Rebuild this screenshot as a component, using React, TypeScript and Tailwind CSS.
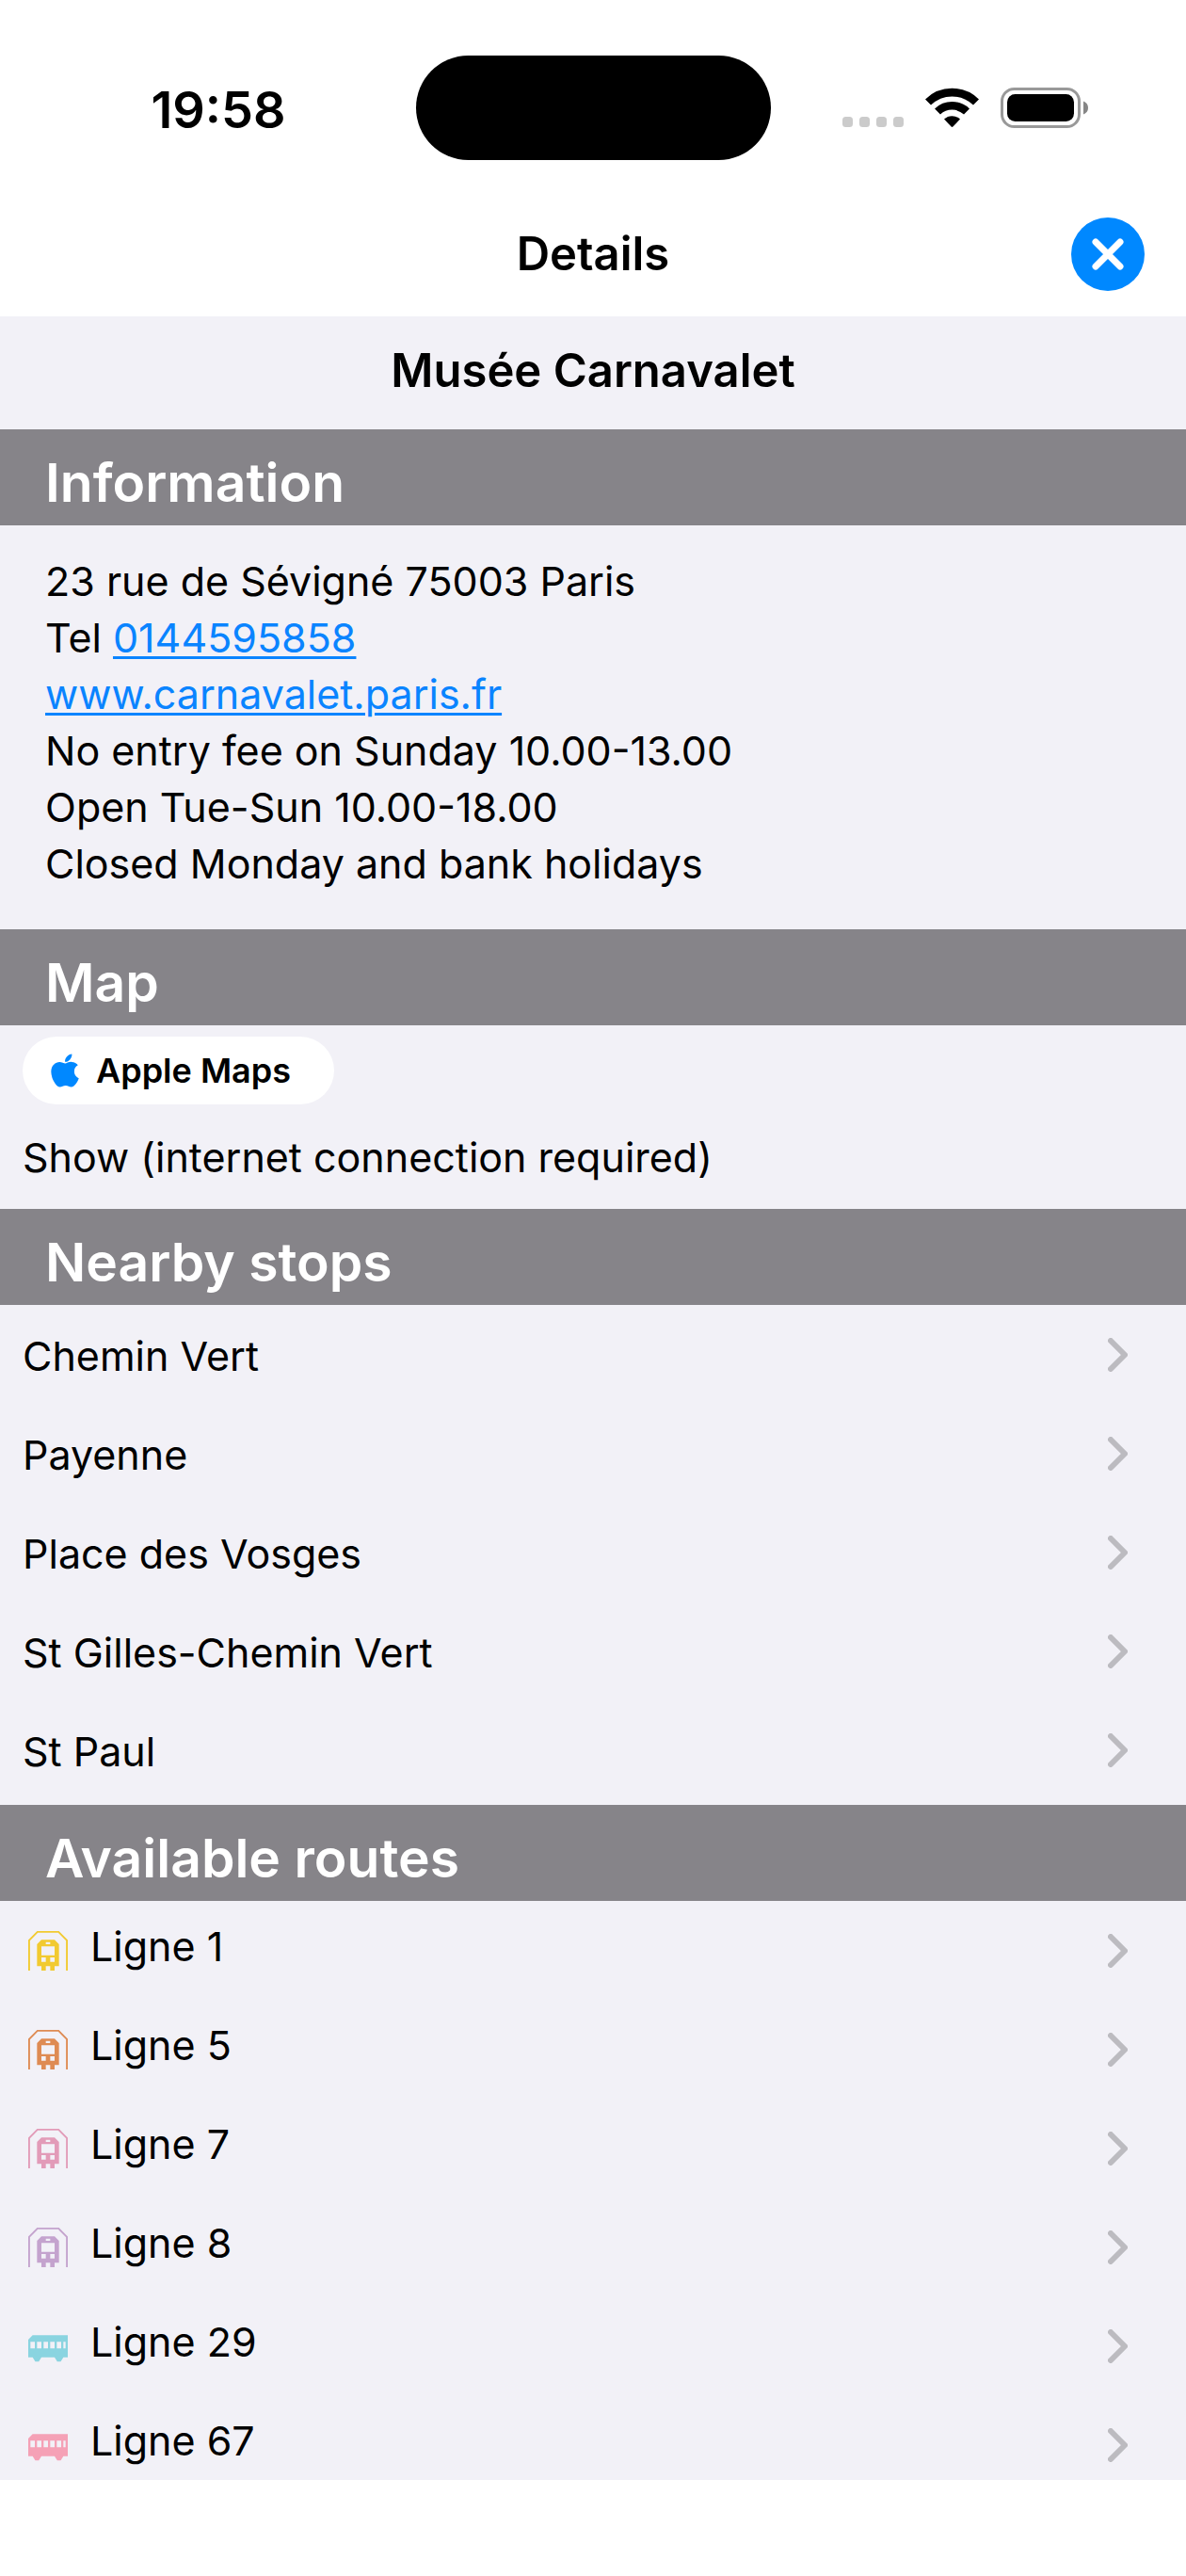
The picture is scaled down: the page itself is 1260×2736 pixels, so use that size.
import * as React from "react";
import { FaApple } from "react-icons/fa";

type RouteKind = "metro" | "bus";

interface Route {
  name: string;
  kind: RouteKind;
  color: string;
}

const stops = [
  "Chemin Vert",
  "Payenne",
  "Place des Vosges",
  "St Gilles-Chemin Vert",
  "St Paul",
];

const routes: Route[] = [
  { name: "Ligne 1", kind: "metro", color: "text-[#f2ca30]" },
  { name: "Ligne 5", kind: "metro", color: "text-[#de8b53]" },
  { name: "Ligne 7", kind: "metro", color: "text-[#e29bb8]" },
  { name: "Ligne 8", kind: "metro", color: "text-[#c4a3ce]" },
  { name: "Ligne 29", kind: "bus", color: "text-[#8ad4e0]" },
  { name: "Ligne 67", kind: "bus", color: "text-[#f5a1b6]" },
];

function MetroIcon() {
  return (
    <svg viewBox="0 0 18 18" className="h-[42px] w-[42px]" aria-hidden="true">
      <path
        d="M0.4 18V4.2L4.2 0.4H13.8L17.6 4.2V18"
        fill="none"
        stroke="currentColor"
        strokeWidth="0.8"
      />
      <path
        fill="currentColor"
        fillRule="evenodd"
        d="M6 4H12L14 6V16H12V18H10V16H8V18H6V16H4V6ZM8 5V6H10V5ZM6 7V11H12V7ZM6 12V14H8V12ZM10 12V14H12V12Z"
      />
    </svg>
  );
}

function BusIcon() {
  return (
    <svg viewBox="0 0 18 18" className="h-[42px] w-[42px]" aria-hidden="true">
      <path
        fill="currentColor"
        fillRule="evenodd"
        d="M2 4H18V14H16L14.8 16H13.2L12 14H6L4.8 16H3.2L2 14H0V6ZM1 7V10H3V7ZM4 7V10H6V7ZM7 7V10H9V7ZM10 7V10H12V7ZM13 7V10H15V7ZM16 7V10H17V7Z"
      />
    </svg>
  );
}

function Chevron() {
  return (
    <svg viewBox="0 0 21 36" className="h-9 w-[21px] text-[#bcbbc0]" aria-hidden="true">
      <path
        d="M3 3L18 18L3 33"
        fill="none"
        stroke="currentColor"
        strokeWidth="6"
        strokeLinecap="round"
        strokeLinejoin="round"
      />
    </svg>
  );
}

function StatusBar() {
  return (
    <div className="grid h-[204px] grid-cols-3 items-center pt-[25px]">
      <div className="justify-self-center pt-1 pl-11 text-[54px] leading-[60px] font-semibold">19:58</div>
      <div className="h-[111px] w-[377px] justify-self-center rounded-full bg-black" />
      <div className="flex items-center justify-end pr-[104px]">
        <svg viewBox="0 0 65 43" className="h-[43px] w-[65px]" fill="#cbcbcb" aria-hidden="true">
          <rect x="0" y="31" width="11" height="11" rx="3.5" />
          <rect x="18" y="31" width="11" height="11" rx="3.5" />
          <rect x="36" y="31" width="11" height="11" rx="3.5" />
          <rect x="54" y="31" width="11" height="11" rx="3.5" />
        </svg>
        <svg viewBox="0 0 57 43" className="ml-[23px] h-[43px] w-[57px]" aria-hidden="true">
          <g fill="none" stroke="#000" strokeWidth="8.6">
            <path d="M3 15.5A36.5 36.5 0 0 1 54 15.5" />
            <path d="M13 25.5A22.5 22.5 0 0 1 44 25.5" />
          </g>
          <path d="M20 33.5A12.5 12.5 0 0 1 37 33.5L29.4 41.6Q28.5 42.4 27.6 41.6Z" />
        </svg>
        <svg viewBox="0 0 93 43" className="ml-[23px] h-[43px] w-[93px]" aria-hidden="true">
          <rect x="1.5" y="1.5" width="82" height="40" rx="13" fill="none" stroke="#999" strokeWidth="3" />
          <rect x="7" y="7" width="71" height="29" rx="8.5" />
          <path d="M88 14.5Q93 16.5 93 21.5Q93 26.5 88 28.5Z" fill="#868686" />
        </svg>
      </div>
    </div>
  );
}

function SectionHeader({ children }: { children: React.ReactNode }) {
  return (
    <h2 className="h-[102px] bg-[#868489] px-12 pt-3 text-[57px] leading-[90px] font-semibold text-white">
      {children}
    </h2>
  );
}

function RowLink({ children }: { children: React.ReactNode }) {
  return (
    <li>
      <a href="#" className="flex h-[105px] items-center justify-between pr-[62px] pl-6">
        {children}
        <Chevron />
      </a>
    </li>
  );
}

export default function App() {
  return (
    <div className="flex h-screen flex-col bg-white font-['Inter',sans-serif] text-[43px] leading-[60px] text-black">
      <StatusBar />

      <header className="grid h-[132px] grid-cols-[1fr_auto_1fr] items-center px-11">
        <h1 className="col-start-2 text-[49px] leading-[60px] font-semibold">Details</h1>
        <button
          aria-label="Close"
          className="flex h-[78px] w-[78px] items-center justify-center justify-self-end rounded-full bg-[#0088ff]"
        >
          <svg viewBox="0 0 34 34" className="h-[34px] w-[34px]" aria-hidden="true">
            <path d="M4 4L30 30M30 4L4 30" stroke="#fff" strokeWidth="7" strokeLinecap="round" />
          </svg>
        </button>
      </header>

      <main className="min-h-0 flex-1 overflow-y-auto bg-[#f2f1f7] [scrollbar-width:none]">
        <p className="pt-7 pb-8 text-center text-[49px] leading-[60px] font-semibold">Musée Carnavalet</p>

        <SectionHeader>Information</SectionHeader>
        <div className="px-12 pt-[29px] pb-10">
          <p>23 rue de Sévigné 75003 Paris</p>
          <p>
            Tel{" "}
            <a
              href="tel:0144595858"
              className="text-[#0a84ff] underline decoration-[3px] underline-offset-4"
            >
              0144595858
            </a>
          </p>
          <p>
            <a href="#" className="text-[#0a84ff] underline decoration-[3px] underline-offset-4">
              www.carnavalet.paris.fr
            </a>
          </p>
          <p>No entry fee on Sunday 10.00-13.00</p>
          <p>Open Tue-Sun 10.00-18.00</p>
          <p>Closed Monday and bank holidays</p>
        </div>

        <SectionHeader>Map</SectionHeader>
        <div className="px-6 pt-3 pb-[25px]">
          <button className="flex h-[72px] items-center gap-[18px] rounded-full bg-white pr-[46px] pl-[30px] text-[36px] font-semibold">
            <FaApple className="h-10 w-[30px] text-[#0088ff]" aria-hidden="true" />
            Apple Maps
          </button>
          <a href="#" className="mt-[26px] block">
            Show (internet connection required)
          </a>
        </div>

        <SectionHeader>Nearby stops</SectionHeader>
        <ul className="pb-[6px]">
          {stops.map((stop) => (
            <RowLink key={stop}>
              <span className="pt-[2px]">{stop}</span>
            </RowLink>
          ))}
        </ul>

        <SectionHeader>Available routes</SectionHeader>
        <ul>
          {routes.map((route) => (
            <RowLink key={route.name}>
              <span className="flex items-center gap-6 pl-[6px]">
                <span className={route.color}>
                  {route.kind === "metro" ? <MetroIcon /> : <BusIcon />}
                </span>
                <span className="pb-[10px]">{route.name}</span>
              </span>
            </RowLink>
          ))}
        </ul>
      </main>

      <footer className="h-[102px] shrink-0" />
    </div>
  );
}
